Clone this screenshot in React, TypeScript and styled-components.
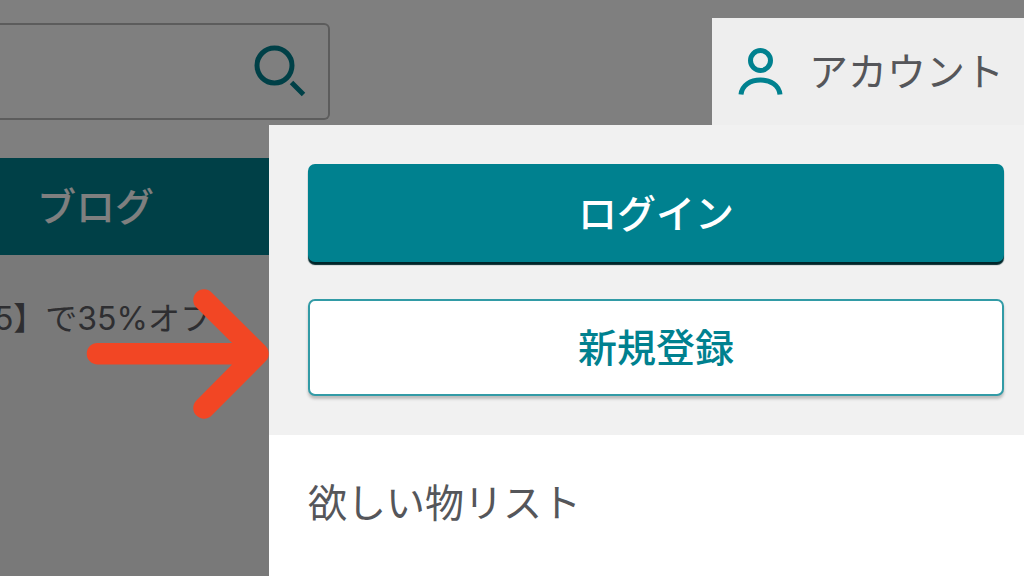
import React from "react";
import styled, { createGlobalStyle } from "styled-components";

const teal = "#00818f";
const ink = "#55565a";

const GlobalStyle = createGlobalStyle`
  *, *::before, *::after { box-sizing: border-box; }
  body {
    margin: 0;
    background: #f2f2f2;
    color: ${ink};
    font-family: "Noto Sans CJK JP", sans-serif;
    font-size: 39px;
    line-height: 56px;
    overflow: hidden;
  }
  button, input { font: inherit; }
`;

const Page = styled.div`
  position: relative;
  min-height: 100vh;
  overflow: hidden;
`;

const Header = styled.header`
  display: flex;
  justify-content: space-between;
  align-items: flex-start;
  height: 158px;
  padding-top: 18px;
  background: #fff;
`;

const SearchForm = styled.form`
  display: flex;
  align-items: center;
  width: 330px;
  height: 97px;
  margin-top: 5px;
  padding: 0 22px 2px 0;
  border: 2px solid #b8b8b8;
  border-left: 0;
  border-radius: 0 6px 6px 0;
`;

const SearchInput = styled.input`
  flex: 1;
  min-width: 0;
  border: 0;
  outline: 0;
  background: transparent;
`;

const IconButton = styled.button`
  display: flex;
  padding: 0;
  border: 0;
  background: transparent;
  color: ${teal};
`;

const AccountTab = styled.button`
  position: relative;
  z-index: 2;
  display: flex;
  align-items: center;
  gap: 24px;
  height: 107px;
  padding: 0 20px 0 25px;
  border: 0;
  background: #eee;
  color: ${ink};
  white-space: nowrap;

  svg { color: ${teal}; }
`;

const Label = styled.span`
  display: block;
  padding-bottom: 5px;
`;

const Nav = styled.nav`
  display: flex;
  align-items: center;
  height: 97px;
  padding: 0 0 5px 37px;
  background: ${teal};
`;

const NavLink = styled.a`
  color: #fff;
  font-weight: 500;
  text-decoration: none;
`;

const Promo = styled.p`
  display: flex;
  justify-content: flex-end;
  width: 212px;
  margin: 0;
  padding-top: 40px;
  color: #5c5d63;
  font-family: Inter, "Noto Sans CJK JP", sans-serif;
  font-size: 32px;
  line-height: 48px;
  white-space: nowrap;
`;

const Shade = styled.div`
  position: absolute;
  inset: 0;
  z-index: 1;
  background: rgba(0, 0, 0, 0.5);
`;

const Menu = styled.aside`
  position: absolute;
  z-index: 2;
  top: 125px;
  right: 0;
  bottom: 0;
  width: calc(100% - 269px);
  background: #fff;
`;

const MenuActions = styled.div`
  display: flex;
  flex-direction: column;
  gap: 37px;
  padding: 39px 20px 39px 39px;
  background: #f1f1f1;
`;

const ActionButton = styled.button<{ $primary?: boolean }>`
  height: ${(p) => (p.$primary ? 98 : 97)}px;
  padding: 0;
  border: ${(p) => (p.$primary ? "0" : "2px solid #329ba6")};
  border-radius: 7px;
  background: ${(p) => (p.$primary ? teal : "#fff")};
  color: ${(p) => (p.$primary ? "#fff" : teal)};
  font-weight: 500;
  box-shadow: ${(p) =>
    p.$primary ? "0 3px 1px #00262a" : "0 3px 3px rgba(0, 0, 0, 0.22)"};
`;

const MenuLink = styled.a`
  display: block;
  padding: 37px 39px;
  color: ${ink};
  text-decoration: none;
`;

const Pointer = styled.svg`
  position: absolute;
  z-index: 3;
  top: 289px;
  left: 86px;
`;

function SearchIcon() {
  return (
    <svg width="52" height="52" viewBox="0 0 52 52" fill="none" stroke="currentColor" strokeWidth="5" aria-hidden="true">
      <circle cx="20.5" cy="20.5" r="17.5" />
      <path d="M37.500 37.500 49.500 49.500" />
    </svg>
  );
}

function PersonIcon() {
  return (
    <svg width="48" height="48" viewBox="0 0 48 48" fill="none" stroke="currentColor" strokeWidth="5" aria-hidden="true">
      <circle cx="23.5" cy="12.5" r="10" />
      <path d="M4 46.500C5 37 13.500 32 23.500 32S42 37 43 46.500" />
    </svg>
  );
}

export default function App() {
  return (
    <>
      <GlobalStyle />
      <Page>
        <Header>
          <SearchForm role="search">
            <SearchInput type="search" aria-label="検索" />
            <IconButton type="button" aria-label="検索">
              <SearchIcon />
            </IconButton>
          </SearchForm>
          <AccountTab type="button" aria-expanded="true">
            <PersonIcon />
            <Label>アカウント</Label>
          </AccountTab>
        </Header>
        <Nav>
          <NavLink href="#blog">ブログ</NavLink>
        </Nav>
        <Promo>5】で35%オフ</Promo>
        <Shade />
        <Menu>
          <MenuActions>
            <ActionButton type="button" $primary>
              <Label>ログイン</Label>
            </ActionButton>
            <ActionButton type="button">
              <Label>新規登録</Label>
            </ActionButton>
          </MenuActions>
          <MenuLink href="#wishlist">欲しい物リスト</MenuLink>
        </Menu>
        <Pointer width="184" height="131" viewBox="0 0 184 131" fill="none" stroke="#f24624" strokeWidth="21.5" strokeLinecap="round" strokeLinejoin="round" aria-hidden="true">
          <path d="M11.500 64.700H170M118 11 172 64.700 118 119" />
        </Pointer>
      </Page>
    </>
  );
}
